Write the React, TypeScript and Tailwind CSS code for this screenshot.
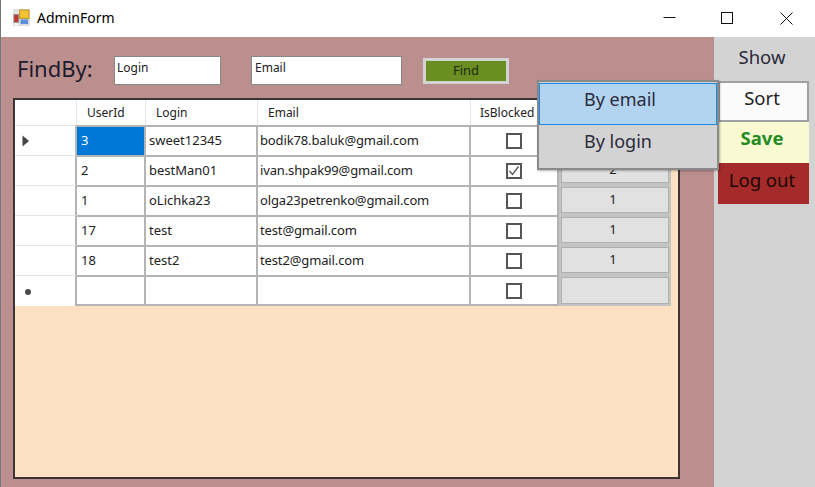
const rows = [
  { id: "3", login: "sweet12345", email: "bodik78.baluk@gmail.com", blocked: false, n: "1", marker: "arrow", selected: true },
  { id: "2", login: "bestMan01", email: "ivan.shpak99@gmail.com", blocked: true, n: "2" },
  { id: "1", login: "oLichka23", email: "olga23petrenko@gmail.com", blocked: false, n: "1" },
  { id: "17", login: "test", email: "test@gmail.com", blocked: false, n: "1" },
  { id: "18", login: "test2", email: "test2@gmail.com", blocked: false, n: "1" },
  { id: "", login: "", email: "", blocked: false, n: "", marker: "star" },
];

const colClass = "grid grid-cols-[62px_69px_112px_213px_88px_112px] w-[656px]";

function Check({ on }: { on: boolean }) {
  return (
    <div className="w-[16px] h-[16px] border-2 border-[#555] bg-white flex items-center justify-center">
      {on && (
        <svg width="12" height="12" viewBox="0 0 12 12" fill="none">
          <path d="M1.5 6 L4.5 9.5 L10.5 1.5" stroke="#555" strokeWidth="1.3" />
        </svg>
      )}
    </div>
  );
}

export default function App() {
  return (
    <div
      className="w-[815px] h-[487px] overflow-hidden bg-white flex flex-col border-l border-[#777] text-[#1a1a1a] relative"
      style={{ fontFamily: '"Noto Sans", "Liberation Sans", sans-serif' }}
    >
      <div className="h-[37px] shrink-0 flex items-center bg-white">
        <svg width="17" height="17" viewBox="0 0 18 18" className="ml-[12px] mt-[-3px]">
          <rect x="0" y="0" width="18" height="18" fill="#e2e2e2" />
          <rect x="7" y="1" width="10" height="9" fill="#f2c230" stroke="#b8962c" />
          <rect x="1" y="6" width="5" height="8" fill="#c8322c" stroke="#8a8a8a" />
          <rect x="8" y="11" width="8" height="5" fill="#5b8fdc" />
          <rect x="2" y="15" width="3" height="2" fill="#fff" />
        </svg>
        <span className="ml-[7px] text-[14px] leading-none text-black mt-[-1px]">AdminForm</span>
        <div className="ml-auto flex items-center h-full">
          <div className="w-[58px] flex justify-center">
            <svg width="13" height="13" viewBox="0 0 13 13"><path d="M0.5 5.5 H12.5" stroke="#111" /></svg>
          </div>
          <div className="w-[59px] flex justify-center">
            <svg width="13" height="13" viewBox="0 0 13 13" fill="none"><rect x="0.5" y="0.5" width="11" height="11" stroke="#111" /></svg>
          </div>
          <div className="w-[58px] flex justify-center">
            <svg width="13" height="13" viewBox="0 0 13 13" fill="none"><path d="M0.5 0.5 L12.5 12.5 M12.5 0.5 L0.5 12.5" stroke="#111" /></svg>
          </div>
        </div>
      </div>

      <div className="flex flex-1 min-h-0">
        <div className="w-[713px] bg-[#bc8f8f] flex flex-col pl-[12px] pt-[17px]">
          <div className="flex items-start h-[31px]">
            <span className="text-[22px] leading-none w-[101px] pl-[4px] mt-[3px] text-[#1c1c2c]">FindBy:</span>
            <div className="w-[107px] h-[29px] mt-[2px] bg-white border border-[#888] text-[12px] pl-[2px] leading-[22px] text-[#222]">Login</div>
            <div className="w-[151px] h-[29px] mt-[2px] ml-[30px] bg-white border border-[#888] text-[12px] pl-[3px] leading-[22px] text-[#222]">Email</div>
            <div className="ml-[21px] mt-[4px] w-[86px] h-[26px] border-[3px] border-[#d3d3d3] bg-[#6b8e23] flex items-center justify-center text-[13px] text-[#1c2a10]">Find</div>
          </div>

          <div className="mt-[13px] w-[667px] h-[381px] border-2 border-[#3c3434] bg-[#fee1c2]">
            <div className={`${colClass} h-[25px] bg-white text-[12px] text-[#222]`}>
              {["", "UserId", "Login", "Email", "IsBlocked", ""].map((h, i) => (
                <div key={i} className={`border-r border-[#e6e6e6] leading-[25px] whitespace-nowrap overflow-hidden ${i === 4 ? "pl-[9px]" : "pl-[10px]"}`}>{h}</div>
              ))}
            </div>
            {rows.map((r, idx) => {
              const last = idx === rows.length - 1;
              return (
                <div key={r.id + r.login} className={`${colClass} ${last ? "h-[31px]" : "h-[30px]"} text-[13px] text-[#222]`}>
                  <div className="bg-white border-r-2 border-t border-t-[#e4e4e4] border-[#b4b4b4] flex items-center pl-[7px]">
                    {r.marker === "arrow" && (
                      <svg width="8" height="12" viewBox="0 0 8 12"><path d="M0.5 0.5 L7 6 L0.5 11.5 Z" fill="#444" /></svg>
                    )}
                    {r.marker === "star" && <div className="w-[6px] h-[6px] rounded-full bg-[#4a4a4a] ml-[3px] mt-[2px]" />}
                  </div>
                  <div className={`border-r-2 border-t-2 border-[#b4b4b4] pl-[4px] leading-[27px] ${last ? "border-b-2" : ""} ${r.selected ? "bg-[#0078d7] text-white" : "bg-white"}`}>{r.id}</div>
                  <div className={`bg-white border-r-2 border-t-2 border-[#b4b4b4] pl-[3px] leading-[27px] ${last ? "border-b-2" : ""}`}>{r.login}</div>
                  <div className={`bg-white border-r-2 border-t-2 border-[#b4b4b4] pl-[2px] leading-[27px] whitespace-nowrap tracking-[-0.13px] ${last ? "border-b-2" : ""}`}>{r.email}</div>
                  <div className={`bg-white border-r-2 border-t-2 border-[#b4b4b4] flex items-center justify-center ${last ? "border-b-2" : ""}`}><Check on={r.blocked} /></div>
                  <div className="bg-[#c4c4c4] p-[2px]">
                    <div className="h-full border border-[#b0b0b0] bg-[#e1e1e1] flex items-center justify-center pr-[4px]">{r.n}</div>
                  </div>
                </div>
              );
            })}
          </div>
        </div>

        <div className="flex-1 bg-[#d3d3d3] flex flex-col items-start pl-[4px] text-[18.5px]">
          <div className="h-[40px] flex items-center justify-center text-[#2a2a3a] leading-none w-[91px] pr-[3px]">Show</div>
          <div className="mt-[4px] w-[91px] h-[41px] bg-[#fbfbfb] border-2 border-[#a0a0a0] flex items-center justify-center text-[#222] pr-[3px] pb-[8px]">Sort</div>
          <div className="w-[91px] h-[41px] bg-[#fafad2] flex items-center justify-center font-bold text-[#228b22] pr-[3px] pb-[9px]">Save</div>
          <div className="w-[91px] h-[41px] bg-[#a52a2a] flex items-center justify-center text-[#180808] pr-[3px] pb-[8px]">Log out</div>
        </div>
      </div>

      <div className="absolute left-[536px] top-[80px] w-[182px] h-[90px] bg-[#d3d3d3] border-2 border-[#8a8a8a] pt-[1px] text-[18px] text-[#2a2a3a] shadow-[1px_1px_2px_rgba(0,0,0,0.3)]">
        <div className="h-[42px] bg-[#b3d4f0] border border-[#1e88e5] flex items-center pl-[44px] pb-[10px]">By email</div>
        <div className="h-[42px] flex items-center pl-[45px] pb-[10px]">By login</div>
      </div>
    </div>
  );
}
